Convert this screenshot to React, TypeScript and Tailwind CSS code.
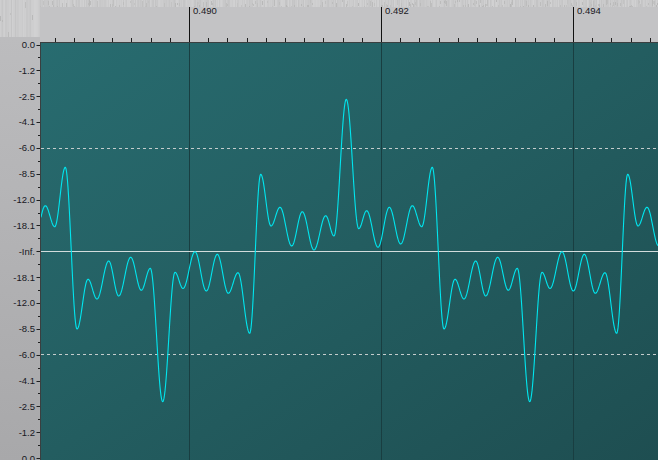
import React from "react";

const FONT = { fontFamily: '"Liberation Sans", Arial, sans-serif' };

// one period of the trace, extrema picked from the capture (page px)
const PERIOD = 367;
const EXTREMA: [number, number][] = [
  [260.7, 174.3], [271, 226], [280, 207.3], [291.7, 246], [302.3, 211.7], [314, 250],
  [325.7, 215.7], [334, 236], [346.3, 99.3], [358.7, 228.7], [366.7, 210.7], [378, 247.3],
  [389.3, 207.3], [400.7, 244], [412.3, 205.7], [421.7, 226.7], [432.3, 167.3],
  [444, 329], [455, 279.3], [464, 299], [475.7, 261], [485.7, 296], [497.7, 257.3],
  [508.3, 290.3], [517.3, 268.3], [529.7, 401.7], [542, 272.3], [550, 288.5],
  [562, 251.7], [573.3, 291], [584.3, 254.3], [595.3, 293.3], [605, 272.7], [616.7, 333.3],
];

const PLOT_X = 41;
const PLOT_Y = 43;
const PLOT_W = 617;
const PLOT_H = 417;

function wavePath() {
  const pts: [number, number][] = [];
  for (let k = -1; k <= 1; k++) EXTREMA.forEach(([x, y]) => pts.push([x + k * PERIOD, y]));
  let d = "";
  let i = 0;
  for (let x = PLOT_X; x <= PLOT_X + PLOT_W; x += 0.5) {
    while (i < pts.length - 2 && pts[i + 1][0] <= x) i++;
    const [x0, y0] = pts[i];
    const [x1, y1] = pts[i + 1];
    const s = (x - x0) / (x1 - x0);
    const y = y0 + ((y1 - y0) * (1 - Math.cos(Math.PI * s))) / 2;
    d += (d ? " L" : "M") + (x - PLOT_X).toFixed(1) + " " + (y - PLOT_Y).toFixed(1);
  }
  return d;
}

function rng(seed: number) {
  return () => {
    seed |= 0;
    seed = (seed + 0x6d2b79f5) | 0;
    let t = Math.imul(seed ^ (seed >>> 15), 1 | seed);
    t = (t + Math.imul(t ^ (t >>> 7), 61 | t)) ^ t;
    return ((t ^ (t >>> 14)) >>> 0) / 4294967296;
  };
}

// brushed-metal strip
function Texture({ w, h, seed }: { w: number; h: number; seed: number }) {
  const r = rng(seed);
  const cols = [];
  for (let x = 0; x < w; x++) {
    const g = 196 + Math.floor(r() * 14);
    cols.push(<rect key={x} x={x} y={0} width={1} height={h} fill={`rgb(${g},${g},${g + 1})`} />);
    if (r() < 0.3) {
      const y = Math.floor(r() * h);
      const g2 = 184 + Math.floor(r() * 12);
      cols.push(
        <rect key={`s${x}`} x={x} y={y} width={1} height={2 + Math.floor(r() * 5)} fill={`rgb(${g2},${g2},${g2})`} />
      );
    }
  }
  return (
    <svg width={w} height={h} className="block" shapeRendering="crispEdges">
      {cols}
    </svg>
  );
}

const MAJORS = [189, 381, 573];
const LABELS = ["0.490", "0.492", "0.494"];

function Ruler() {
  const ticks = [];
  for (let k = -7; k < 26; k++) {
    const x = Math.round(189 + k * 19.2) - 40 + 0.5;
    if (x < 1 || x > 618) continue;
    ticks.push(<line key={k} x1={x} x2={x} y1={38} y2={42} stroke="#1e1e1e" strokeWidth={1} />);
  }
  return (
    <div className="relative h-[42px] flex-1 bg-[#c3c3c5]">
      <div className="absolute left-0 top-0">
        <Texture w={618} h={7} seed={7} />
      </div>
      <svg width={618} height={42} className="absolute left-0 top-0" style={FONT}>
        {ticks}
        {MAJORS.map((m, i) => (
          <g key={m}>
            <line x1={m - 40 + 0.5} x2={m - 40 + 0.5} y1={7} y2={42} stroke="#111" strokeWidth={1} />
            <text x={m - 40 + 4} y={14} fontSize={9.5} fill="#18181e">
              {LABELS[i]}
            </text>
          </g>
        ))}
      </svg>
    </div>
  );
}

const DB = ["0.0", "-1.2", "-2.5", "-4.1", "-6.0", "-8.5", "-12.0", "-18.1", "-Inf.", "-18.1", "-12.0", "-8.5", "-6.0", "-4.1", "-2.5", "-1.2", "0.0"];
const STEP = 25.85;
const SCALE_TOP = 37;

function Scale() {
  return (
    <div className="flex w-[40px] flex-col">
      <Texture w={40} h={SCALE_TOP} seed={3} />
      <div className="flex-1 bg-linear-to-b from-[#bcbcbe] to-[#a8a8aa]">
        <svg width={40} height={460 - SCALE_TOP} className="block" style={FONT}>
          {DB.map((l, i) => {
            const y = 44.5 + i * STEP - SCALE_TOP;
            return (
              <g key={i}>
                <text x={35} y={y + 3.4} fontSize={9.5} textAnchor="end" fill="#18181e">
                  {l}
                </text>
                <line x1={36.5} x2={40} y1={Math.round(y) + 0.5} y2={Math.round(y) + 0.5} stroke="#1e1e1e" />
                {i < DB.length - 1 && (
                  <line x1={38} x2={40} y1={Math.round(y + STEP / 2) + 0.5} y2={Math.round(y + STEP / 2) + 0.5} stroke="#1e1e1e" />
                )}
              </g>
            );
          })}
        </svg>
      </div>
    </div>
  );
}

function Plot() {
  const mid = 251.3 - PLOT_Y;
  const dash1 = 148.3 - PLOT_Y;
  const dash2 = 354.3 - PLOT_Y;
  return (
    <div className="flex-1 border-l border-t border-[#3a3f40] bg-linear-to-br from-[#286c70] via-[#235d60] to-[#1e4e51]">
      <svg width={PLOT_W} height={PLOT_H} className="block">
        {MAJORS.map((m) => (
          <line key={m} x1={m - PLOT_X + 0.5} x2={m - PLOT_X + 0.5} y1={0} y2={PLOT_H} stroke="#193e41" strokeWidth={1} />
        ))}
        <line x1={0} x2={PLOT_W} y1={Math.round(dash1) + 0.5} y2={Math.round(dash1) + 0.5} stroke="#c4cccc" strokeDasharray="3 3" />
        <line x1={0} x2={PLOT_W} y1={Math.round(dash2) + 0.5} y2={Math.round(dash2) + 0.5} stroke="#c4cccc" strokeDasharray="3 3" />
        <line x1={0} x2={PLOT_W} y1={Math.round(mid) + 0.5} y2={Math.round(mid) + 0.5} stroke="#d2dcdc" />
        <path d={wavePath()} fill="none" stroke="#00e6ef" strokeWidth={1.1} strokeLinejoin="round" />
      </svg>
    </div>
  );
}

export default function App() {
  return (
    <div className="flex h-[460px] w-[658px] overflow-hidden bg-[#c3c3c5]">
      <Scale />
      <div className="flex flex-1 flex-col">
        <Ruler />
        <Plot />
      </div>
    </div>
  );
}
